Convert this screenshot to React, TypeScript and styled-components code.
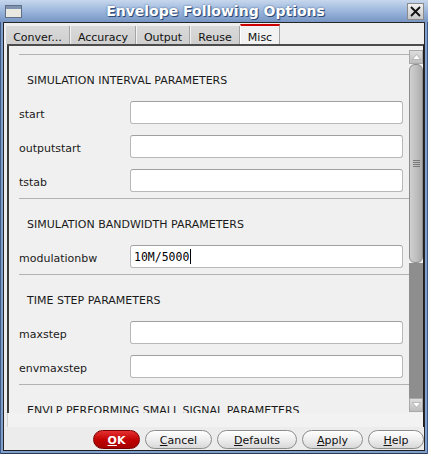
import React from 'react'
import styled, { createGlobalStyle } from 'styled-components'

const GlobalStyle = createGlobalStyle`
  body {
    margin: 0;
    background: #ffffff;
    font-family: "DejaVu Sans", "Liberation Sans", sans-serif;
  }
`

const Frame = styled.div`
  width: 428px;
  height: 454px;
  box-sizing: border-box;
  background: #7f9ecb;
  padding: 0 3px 3px 3px;
  display: flex;
  flex-direction: column;
  box-shadow: inset 1px 0 0 #3d5a86, inset -1px 0 0 #3d5a86, inset 0 -1px 0 #2a3a55;
`

const TitleBar = styled.div`
  height: 22px;
  margin: 0 -3px;
  padding: 0 4px 0 5px;
  display: flex;
  align-items: center;
  background: linear-gradient(#c6d7ed, #94b0d8 60%, #7896c4);
`

const TitleText = styled.div`
  flex: 1;
  text-align: center;
  color: #ffffff;
  font-weight: bold;
  font-size: 14px;
  text-shadow: 1px 1px 0 #2f4b75, 0 0 2px #3a5a88;
  padding-left: 2px;
`

const Inner = styled.div`
  flex: 1;
  display: flex;
  flex-direction: column;
  background: #ececec;
  border: 1px solid #262626;
  border-bottom-color: #1e1e1e;
`

const TabBar = styled.div`
  height: 21px;
  padding-left: 1px;
  display: flex;
  align-items: flex-end;
  background: #eeeeee;
`

const Tab = styled.div<{ $w: number; $active?: boolean }>`
  width: ${p => p.$w}px;
  height: ${p => (p.$active ? 20 : 18)}px;
  box-sizing: border-box;
  font-size: 11px;
  color: #111111;
  display: flex;
  justify-content: center;
  align-items: center;
  padding-top: ${p => (p.$active ? 5 : 4)}px;
  background: ${p => (p.$active ? '#f2f2f2' : 'linear-gradient(#d9d9d9, #cfcfcf)')};
  border-left: 1px solid ${p => (p.$active ? '#ffffff' : '#f2f2f2')};
  border-right: 1px solid #a4a4a4;
  border-top: ${p => (p.$active ? '2px solid #cc0000' : 'none')};
`

const Panel = styled.div`
  height: 381px;
  margin-left: 3px;
  display: flex;
  flex-direction: column;
  border-top: 2px solid #4c4c4c;
  border-right: 1px solid #1e1e1e;
  background: #f0f0f0;
`

const Viewport = styled.div`
  height: 367px;
  display: flex;
  border-left: 2px solid #3a3a3a;
  overflow: hidden;
`

const Content = styled.div`
  flex: 1;
  overflow: hidden;
  padding: 8px 0 0 10px;
`

const Group = styled.div`
  border-top: 1px solid #b2b2b2;
  padding-bottom: 6px;
`

const Heading = styled.div`
  height: 24px;
  line-height: 24px;
  margin: 14px 0 8px;
  padding-left: 8px;
  font-size: 11px;
  color: #1a1a1a;
  white-space: nowrap;
`

const Rows = styled.div`
  display: grid;
  grid-template-columns: 111px 1fr;
  row-gap: 11px;
  padding-right: 6px;
`

const Label = styled.div`
  font-size: 11px;
  color: #1a1a1a;
  display: flex;
  align-items: center;
  height: 23px;
  box-sizing: border-box;
  padding-top: 4px;
`

const Field = styled.div`
  height: 23px;
  box-sizing: border-box;
  background: #ffffff;
  border: 1px solid #b8b8b8;
  border-top-color: #a0a0a0;
  border-radius: 3px;
  display: flex;
  align-items: center;
  padding-left: 3px;
  font-family: "DejaVu Sans Mono", "Liberation Mono", monospace;
  font-size: 11.5px;
  color: #000000;
`

const Caret = styled.span`
  display: inline-block;
  width: 1px;
  height: 15px;
  background: #000000;
  margin-left: 1px;
`

const Scrollbar = styled.div`
  width: 14px;
  display: flex;
  flex-direction: column;
  padding: 4px 0 1px;
  background: #f0f0f0;
`

const Arrow = styled.div`
  height: 14px;
  box-sizing: border-box;
  background: linear-gradient(#dedede, #bdbdbd);
  border: 1px solid #a8a8a8;
  display: flex;
  align-items: center;
  justify-content: center;
`

const Thumb = styled.div`
  height: 199px;
  box-sizing: border-box;
  background: linear-gradient(90deg, #d0d0d0, #bcbcbc 60%, #aaaaaa);
  border: 1px solid #8c8c8c;
  border-radius: 6px;
  display: flex;
  align-items: center;
  justify-content: center;
`

const Grip = styled.div`
  width: 7px;
  height: 8px;
  background: repeating-linear-gradient(#7a7a7a 0 1px, transparent 1px 2px);
`

const Track = styled.div`
  flex: 1;
  background: #8e8e8e;
`

const BottomStrip = styled.div`
  flex: 1;
  border-left: 1px solid #d0d0d0;
  background: #f2f2f2;
`

const ButtonRow = styled.div`
  flex: 1;
  display: flex;
  justify-content: flex-end;
  align-items: flex-end;
  gap: 5px;
  padding: 0 0 1px;
`

const Button = styled.div<{ $w: number; $primary?: boolean }>`
  width: ${p => p.$w}px;
  height: 19px;
  box-sizing: border-box;
  border-radius: 10px;
  border: 1px solid ${p => (p.$primary ? '#7a0000' : '#8c8c8c')};
  background: ${p =>
    p.$primary ? 'linear-gradient(#e43030, #c00000 55%, #a40000)' : 'linear-gradient(#ffffff, #ececec 55%, #d8d8d8)'};
  color: ${p => (p.$primary ? '#ffffff' : '#111111')};
  font-weight: ${p => (p.$primary ? 'bold' : 'normal')};
  font-size: 11px;
  display: flex;
  align-items: center;
  justify-content: center;
  padding-top: 1px;
`

const Mn = styled.span`
  text-decoration: underline;
`

const WindowIcon = () => (
  <svg width="17" height="13" viewBox="0 0 17 13">
    <rect x="0.5" y="0.5" width="16" height="12" fill="#e9e9e2" stroke="#5e6f86" />
    <rect x="1" y="1" width="15" height="3" fill="#7f93b0" />
  </svg>
)

const CloseIcon = () => (
  <svg width="17" height="17" viewBox="0 0 17 17">
    <defs>
      <linearGradient id="cbg" x1="0" y1="0" x2="0" y2="1">
        <stop offset="0" stopColor="#f2f2f2" />
        <stop offset="1" stopColor="#c6c6c6" />
      </linearGradient>
    </defs>
    <rect x="0.5" y="0.5" width="16" height="16" fill="url(#cbg)" stroke="#8a8a8a" />
    <path d="M4 4 L13 13 M13 4 L4 13" stroke="#111" strokeWidth="1.8" />
  </svg>
)

const UpGlyph = ({ down }: { down?: boolean }) => (
  <svg width="9" height="6" viewBox="0 0 9 6">
    <path d={down ? 'M0.5 0.5 L8.5 0.5 L4.5 5.5 Z' : 'M0.5 5.5 L8.5 5.5 L4.5 0.5 Z'} fill="#ffffff" stroke="#9a9a9a" strokeWidth="0.6" />
  </svg>
)

const groups = [
  { title: 'SIMULATION INTERVAL PARAMETERS', rows: [['start', ''], ['outputstart', ''], ['tstab', '']] },
  { title: 'SIMULATION BANDWIDTH PARAMETERS', rows: [['modulationbw', '10M/5000']] },
  { title: 'TIME STEP PARAMETERS', rows: [['maxstep', ''], ['envmaxstep', '']] },
  { title: 'ENVLP PERFORMING SMALL SIGNAL PARAMETERS', rows: [] as string[][] },
]

const tabs: [string, number][] = [
  ['Conver...', 65],
  ['Accuracy', 66],
  ['Output', 54],
  ['Reuse', 50],
  ['Misc', 40],
]

const App = () => (
  <>
    <GlobalStyle />
    <Frame>
      <TitleBar>
        <WindowIcon />
        <TitleText>Envelope Following Options</TitleText>
        <CloseIcon />
      </TitleBar>
      <Inner>
        <TabBar>
          {tabs.map(([name, w]) => (
            <Tab key={name} $w={w} $active={name === 'Misc'}>
              {name}
            </Tab>
          ))}
        </TabBar>
        <Panel>
          <Viewport>
            <Content>
              {groups.map(g => (
                <Group key={g.title}>
                  <Heading>{g.title}</Heading>
                  {g.rows.length > 0 && (
                    <Rows>
                      {g.rows.map(([label, value]) => (
                        <React.Fragment key={label}>
                          <Label>{label}</Label>
                          <Field>
                            {value}
                            {value && <Caret />}
                          </Field>
                        </React.Fragment>
                      ))}
                    </Rows>
                  )}
                </Group>
              ))}
            </Content>
            <Scrollbar>
              <Arrow>
                <UpGlyph />
              </Arrow>
              <Thumb>
                <Grip />
              </Thumb>
              <Track />
              <Arrow>
                <UpGlyph down />
              </Arrow>
            </Scrollbar>
          </Viewport>
          <BottomStrip />
        </Panel>
        <ButtonRow>
          <Button $w={47} $primary>
            <Mn>O</Mn>K
          </Button>
          <Button $w={67}>
            <Mn>C</Mn>ancel
          </Button>
          <Button $w={80}>
            <Mn>D</Mn>efaults
          </Button>
          <Button $w={61}>
            <Mn>A</Mn>pply
          </Button>
          <Button $w={56}>
            <Mn>H</Mn>elp
          </Button>
        </ButtonRow>
      </Inner>
    </Frame>
  </>
)

export default App
